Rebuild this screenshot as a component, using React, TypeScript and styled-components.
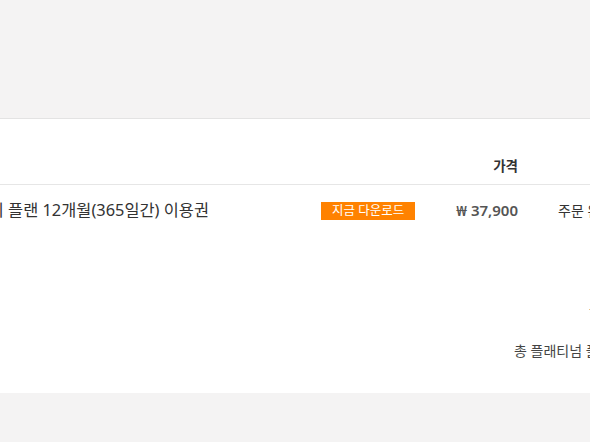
import React from "react";
import styled, { createGlobalStyle } from "styled-components";

const Global = createGlobalStyle`
  html, body { margin: 0; padding: 0; background: #f4f3f3; overflow: hidden; }
  body { font-family: "Noto Sans", "Noto Sans CJK KR", sans-serif; color: #333; }
`;

const Page = styled.div`
  width: 590px;
  height: 442px;
  overflow: hidden;
  display: flex;
  flex-direction: column;
`;

const TopBand = styled.div`
  height: 118px;
  flex: none;
`;

const Panel = styled.section`
  background: #fff;
  border-top: 1px solid #e3e3e3;
  height: 274px;
  flex: none;
  overflow: hidden;
`;

const Inner = styled.div`
  margin-left: -260px;
  width: 1100px;
`;

const Row = styled.div<{ $head?: boolean }>`
  display: grid;
  grid-template-columns: 581px 100px 97px 190px 1fr;
  align-items: center;
  height: ${(p) => (p.$head ? "65px" : "50px")};
  border-bottom: ${(p) => (p.$head ? "1px solid #e6e6e6" : "none")};
`;

const HeadCell = styled.div<{ $align?: string }>`
  font-size: 13.5px;
  font-weight: 700;
  color: #333;
  text-align: ${(p) => p.$align || "left"};
  padding-top: 26px;
  white-space: nowrap;
`;

const Name = styled.div`
  font-size: 16.4px;
  color: #333;
  white-space: nowrap;
  padding-left: 154px;
  padding-bottom: 2px;
`;

const BadgeCell = styled.div`
  display: flex;
  padding-top: 1px;
`;

const Badge = styled.span`
  display: inline-block;
  background: #ff8200;
  color: #fff;
  font-size: 12.5px;
  line-height: 18px;
  padding: 0 11px;
  white-space: nowrap;
`;

const Price = styled.div`
  font-size: 15px;
  font-weight: 600;
  color: #555;
  text-align: right;
  white-space: nowrap;
`;

const Status = styled.div`
  font-size: 14px;
  color: #333;
  padding-left: 40px;
  white-space: nowrap;
`;

const Summary = styled.div`
  display: flex;
  flex-direction: column;
  align-items: flex-start;
  padding-left: 774px;
  margin-top: 68px;
  gap: 17px;
`;

const SummaryLine = styled.div<{ $offset?: number }>`
  font-size: 14px;
  color: #444;
  white-space: nowrap;
  margin-left: ${(p) => p.$offset || 0}px;
`;

export default function App() {
  return (
    <>
      <Global />
      <Page>
        <TopBand />
        <Panel>
          <Inner>
            <Row $head>
              <HeadCell>상품명</HeadCell>
              <HeadCell />
              <HeadCell $align="right">가격</HeadCell>
              <HeadCell $align="right">상태</HeadCell>
              <HeadCell />
            </Row>
            <Row>
              <Name>플래티넘 패밀리 플랜 12개월(365일간) 이용권</Name>
              <BadgeCell>
                <Badge>지금 다운로드</Badge>
              </BadgeCell>
              <Price>₩ 37,900</Price>
              <Status>주문 완료</Status>
              <div />
            </Row>
            <Summary>
              <SummaryLine $offset={75}>합계 ₩ 37,900</SummaryLine>
              <SummaryLine>총 플래티넘 플랜 이용 기간</SummaryLine>
            </Summary>
          </Inner>
        </Panel>
      </Page>
    </>
  );
}
